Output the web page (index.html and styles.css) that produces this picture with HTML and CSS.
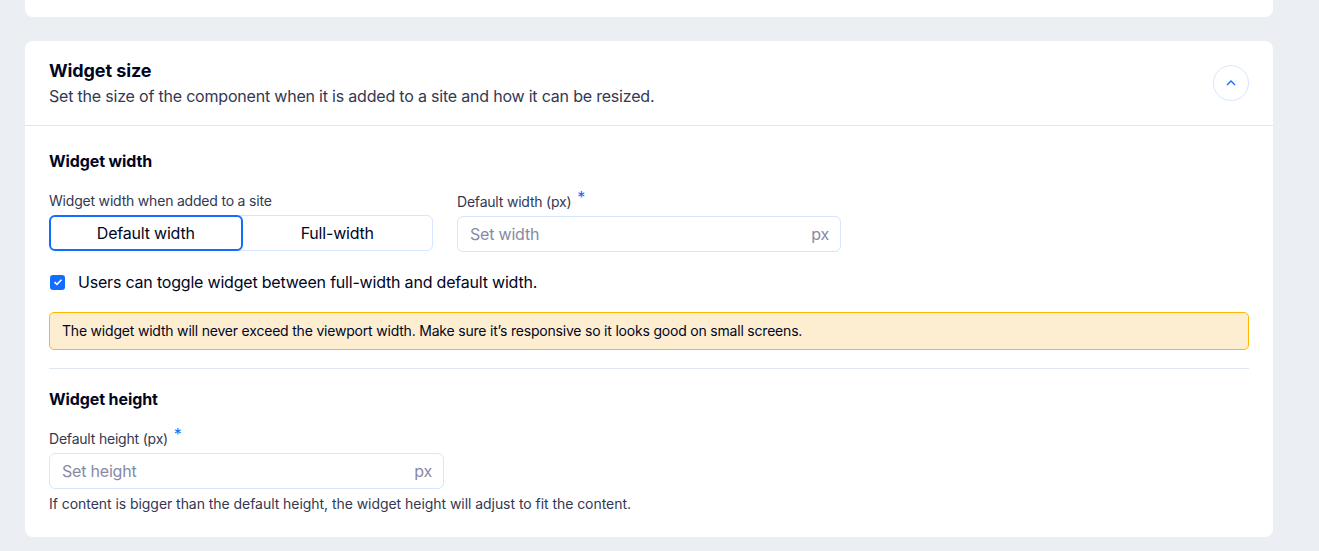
FILE: index.html
```html
<!DOCTYPE html>
<html lang="en">
<head>
<meta charset="utf-8">
<title>Widget size</title>
<link rel="stylesheet" href="styles.css">
</head>
<body>
<div class="page">
  <div class="card card-top"></div>
  <section class="card">
    <header class="card-header">
      <div class="header-text">
        <h2 class="card-title">Widget size</h2>
        <p class="card-subtitle">Set the size of the component when it is added to a site and how it can be resized.</p>
      </div>
      <button class="collapse-btn" aria-label="Collapse">
        <svg width="10" height="6" viewBox="0 0 10 6"><path d="M1 5 L5 1 L9 5" fill="none" stroke="#116dff" stroke-width="1.4"/></svg>
      </button>
    </header>
    <div class="card-body">
      <h3 class="section-title">Widget width</h3>
      <div class="field-row">
        <div class="field">
          <label class="field-label">Widget width when added to a site</label>
          <div class="segmented">
            <button class="seg seg-active">Default width</button>
            <button class="seg">Full-width</button>
          </div>
        </div>
        <div class="field">
          <label class="field-label">Default width (px) <span class="req">*</span></label>
          <div class="input">
            <span class="placeholder">Set width</span>
            <span class="suffix">px</span>
          </div>
        </div>
      </div>
      <div class="checkbox-row">
        <span class="checkbox">
          <svg width="10" height="8" viewBox="0 0 10 8"><path d="M1.5 4.2 L3.9 6.3 L8.5 1.7" fill="none" stroke="#fff" stroke-width="1.6"/></svg>
        </span>
        <span class="checkbox-label">Users can toggle widget between full-width and default width.</span>
      </div>
      <div class="notice">The widget width will never exceed the viewport width. Make sure it’s responsive so it looks good on small screens.</div>
      <hr class="divider">
      <h3 class="section-title">Widget height</h3>
      <div class="field field-height">
        <label class="field-label">Default height (px) <span class="req">*</span></label>
        <div class="input">
          <span class="placeholder">Set height</span>
          <span class="suffix">px</span>
        </div>
        <p class="help">If content is bigger than the default height, the widget height will adjust to fit the content.</p>
      </div>
    </div>
  </section>
</div>
</body>
</html>
```
FILE: styles.css
```css
* { box-sizing: border-box; }
html, body {
  margin: 0;
  padding: 0;
  background: #ebeef3;
  font-family: "Inter", "Noto Sans", sans-serif;
  color: #000624;
  letter-spacing: -0.2px;
}
.page {
  padding: 0 46px 0 25px;
  display: flex;
  flex-direction: column;
  gap: 24px;
  margin-top: -30px;
}
.card {
  background: #fff;
  border-radius: 8px;
}
.card-top { height: 47px; }
.card-header {
  display: flex;
  align-items: center;
  justify-content: space-between;
  padding: 18px 24px 18px;
  border-bottom: 1px solid #e2e6ec;
}
.card-title {
  margin: 0;
  font-size: 18px;
  line-height: 24px;
  font-weight: 700;
  letter-spacing: -0.1px;
}
.card-subtitle {
  margin: 2px 0 0;
  font-size: 16px;
  line-height: 22px;
  color: #333853;
}
.collapse-btn {
  width: 36px;
  height: 36px;
  border-radius: 50%;
  border: 1px solid #d6e6fe;
  background: #fff;
  display: flex;
  align-items: center;
  justify-content: center;
  padding: 0;
}
.card-body {
  padding: 25px 24px 24px;
}
.section-title {
  margin: 0;
  font-size: 16px;
  line-height: 20px;
  font-weight: 700;
  letter-spacing: -0.1px;
}
.field-row {
  display: grid;
  grid-template-columns: 384px 384px;
  gap: 24px;
  margin-top: 21px;
}
.field { display: flex; flex-direction: column; }
.field-label {
  font-size: 14px;
  line-height: 18px;
  color: #333853;
  margin-bottom: 5px;
}
.req {
  color: #116dff;
  font-size: 16px;
  position: relative;
  top: -4px;
  margin-left: 2px;
}
.segmented {
  display: flex;
  height: 36px;
  border: 1px solid #d6e6fe;
  border-radius: 6px;
}
.seg {
  flex: 1;
  border: none;
  background: transparent;
  font-family: inherit;
  font-size: 16px;
  letter-spacing: -0.2px;
  color: #000624;
  padding: 0;
}
.seg-active {
  border: 2px solid #116dff;
  border-radius: 6px;
  margin: -1px 0 -1px -1px;
}
.input {
  height: 36px;
  border: 1px solid #d6e6fe;
  border-radius: 6px;
  display: flex;
  align-items: center;
  justify-content: space-between;
  padding: 0 11px 0 12px;
  font-size: 16px;
}
.placeholder { color: #868aa5; }
.suffix { color: #868aa5; }
.checkbox-row {
  display: flex;
  align-items: center;
  gap: 13px;
  margin-top: 19px;
}
.checkbox {
  width: 15px;
  height: 15px;
  border-radius: 3px;
  background: #116dff;
  display: flex;
  align-items: center;
  justify-content: center;
  margin-left: 1px;
}
.checkbox-label { font-size: 16px; line-height: 22px; }
.notice {
  margin-top: 19px;
  background: #feeed1;
  border: 1px solid #ffb700;
  border-radius: 5px;
  padding: 9px 12px;
  font-size: 14px;
  line-height: 18px;
}
.divider {
  border: none;
  border-top: 1px solid #e0e6ee;
  margin: 18px 0 20px;
}
.field-height { width: 395px; margin-top: 20px; }
.help {
  margin: 6px 0 0;
  font-size: 14px;
  line-height: 18px;
  color: #333853;
  white-space: nowrap;
  letter-spacing: -0.05px;
}
```
